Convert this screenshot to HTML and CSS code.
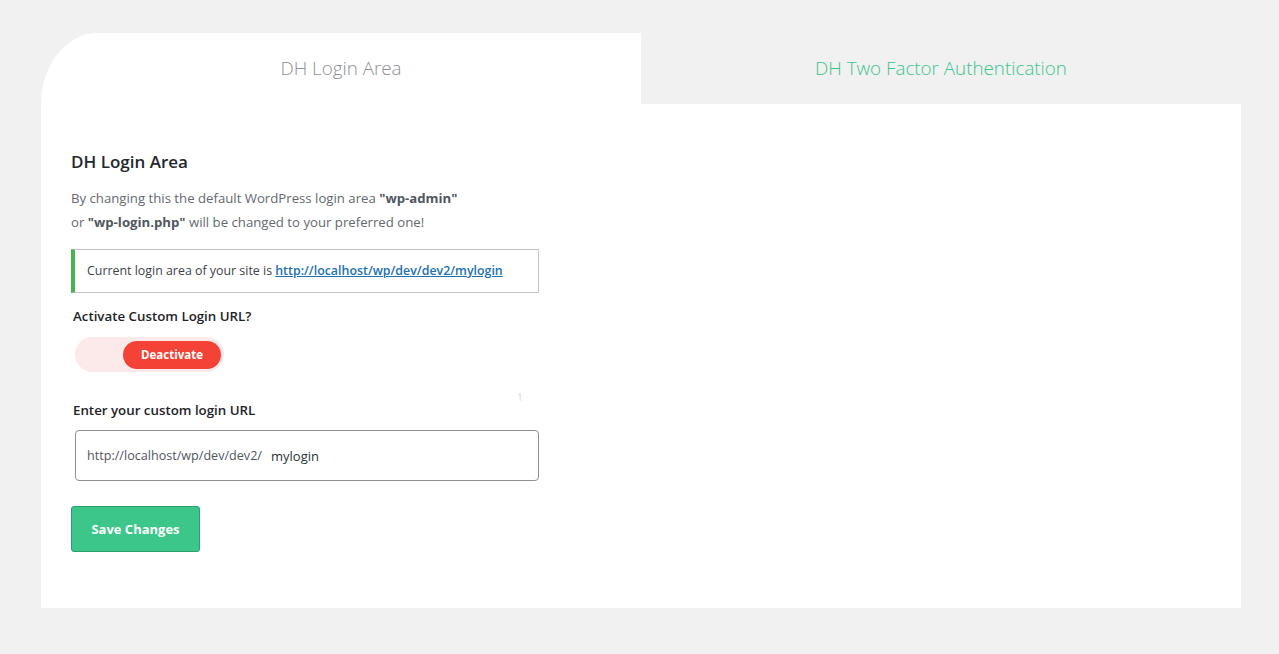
FILE: index.html
```html
<!DOCTYPE html>
<html lang="en">
<head>
    <meta charset="UTF-8">
    <meta name="viewport" content="width=device-width, initial-scale=1.0">
    <title>DH Login Area</title>
    <link rel="stylesheet" href="styles.css">
</head>
<body>
    <div class="wrap">
        <div class="tabs">
            <div class="tab active">DH Login Area</div>
            <div class="tab">DH Two Factor Authentication</div>
        </div>
        <div class="panel">
            <div class="section">
                <h2 class="title">DH Login Area</h2>
                <p class="desc">By changing this the default WordPress login area <b>"wp-admin"</b><br>or <b>"wp-login.php"</b> will be changed to your preferred one!</p>
                <div class="notice">Current login area of your site is <a href="#">http://localhost/wp/dev/dev2/mylogin</a></div>

                <div class="field">
                    <label class="label">Activate Custom Login URL?</label>
                    <div class="toggle">
                        <span class="knob">Deactivate</span>
                    </div>
                </div>

                <div class="field field-url">
                    <span class="count">1</span>
                    <label class="label">Enter your custom login URL</label>
                    <div class="url-input">
                        <span class="prefix">http://localhost/wp/dev/dev2/</span>
                        <input type="text" class="slug" value="mylogin">
                    </div>
                </div>

                <button class="save">Save Changes</button>
            </div>
        </div>
    </div>
</body>
</html>
```

FILE: styles.css
```css
body {
    margin: 0;
    background-color: #f1f1f1;
    font-family: 'Open Sans', 'Noto Sans', sans-serif;
    color: #3c434a;
}
.wrap {
    width: 1200px;
    padding: 33px 0 0 41px;
}
.tabs {
    display: flex;
}
.tab {
    flex: 1;
    height: 70px;
    display: flex;
    align-items: center;
    justify-content: center;
    font-size: 18.8px;
    font-weight: 300;
    color: #3cc68a;
    padding-bottom: 1px;
}
.tab.active {
    background: #fff;
    color: #8c8f94;
    border-top-left-radius: 60px 75px;
}
.panel {
    background: #fff;
    height: 504px;
}
.section {
    padding: 46px 30px 0 30px;
    width: 470px;
}
.title {
    margin: 0 0 13px 0;
    font-size: 17px;
    font-weight: 600;
    color: #23282d;
}
.desc {
    margin: 0 0 15px 0;
    font-size: 13.2px;
    line-height: 24px;
    color: #646970;
}
.desc b {
    font-weight: 700;
    color: #50575e;
}
.notice {
    border: 1px solid #c3c4c7;
    border-left: 4px solid #46b450;
    padding: 12px 12px;
    font-size: 12.4px;
    line-height: 18px;
    color: #3c434a;
    width: 439px;
}
.notice a {
    color: #2271b1;
    font-weight: 600;
}
.field {
    padding-left: 2px;
    margin-top: 14px;
}
.label {
    display: block;
    font-size: 13.3px;
    font-weight: 600;
    color: #1d2327;
    margin-bottom: 12px;
}
.toggle {
    margin-left: 2px;
    width: 149px;
    height: 35px;
    border-radius: 18px;
    background: #fce9e9;
    display: flex;
    align-items: center;
    justify-content: flex-end;
    padding-right: 3px;
    box-sizing: border-box;
}
.knob {
    width: 98px;
    height: 28px;
    border-radius: 14px;
    background: #f44336;
    color: #fff;
    font-size: 11.5px;
    font-weight: 700;
    display: flex;
    align-items: center;
    justify-content: center;
}
.field-url {
    position: relative;
    margin-top: 29px;
}
.count {
    position: absolute;
    right: 18px;
    top: -12px;
    font-size: 11px;
    color: #dcdcde;
}
.field-url .label {
    margin-bottom: 11px;
}
.url-input {
    margin-left: 2px;
    width: 464px;
    height: 51px;
    box-sizing: border-box;
    border: 1px solid #8c8f94;
    border-radius: 4px;
    display: flex;
    align-items: center;
    padding-left: 11px;
}
.prefix {
    font-size: 12.6px;
    color: #50575e;
}
.slug {
    border: none;
    outline: none;
    flex: 1;
    font-family: inherit;
    font-size: 13px;
    color: #2c3338;
    padding: 0 0 0 9px;
    background: transparent;
}
.save {
    margin-top: 25px;
    width: 129px;
    height: 46px;
    background: #3cc68a;
    border: 1px solid #2a9e6b;
    border-radius: 3px;
    color: #fff;
    font-family: inherit;
    font-size: 13px;
    font-weight: 700;
    cursor: pointer;
}
```
